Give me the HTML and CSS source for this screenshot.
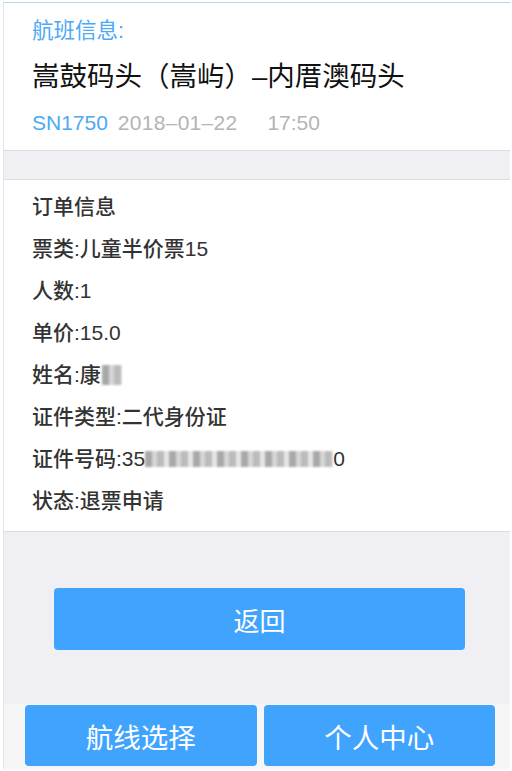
FILE: index.html
```html
<!DOCTYPE html>
<html lang="zh-CN">
<head>
    <meta charset="UTF-8">
    <meta name="viewport" content="width=device-width, initial-scale=1.0">
    <title>订单详情</title>
    <link rel="stylesheet" href="styles.css">
</head>
<body>
    <div class="screen">
        <div class="flight-card">
            <div class="flight-label">航班信息:</div>
            <div class="flight-route">嵩鼓码头（嵩屿）–内厝澳码头</div>
            <div class="flight-meta">
                <span class="flight-no">SN1750</span>
                <span class="flight-date">2018–01–22</span>
                <span class="flight-time">17:50</span>
            </div>
        </div>

        <div class="order-card">
            <div class="order-row">订单信息</div>
            <div class="order-row">票类:儿童半价票15</div>
            <div class="order-row">人数:1</div>
            <div class="order-row">单价:15.0</div>
            <div class="order-row">姓名:康<span class="mosaic mosaic-name"></span></div>
            <div class="order-row">证件类型:二代身份证</div>
            <div class="order-row">证件号码:35<span class="mosaic mosaic-id"></span>0</div>
            <div class="order-row">状态:退票申请</div>
        </div>

        <div class="back-area">
            <button class="blue-button back-button">返回</button>
        </div>

        <div class="tab-bar">
            <button class="blue-button tab-button">航线选择</button>
            <button class="blue-button tab-button">个人中心</button>
        </div>
    </div>
</body>
</html>
```

FILE: styles.css
```css
body {
    margin: 0;
    background: #fff;
    font-family: "Liberation Sans", "Noto Sans CJK SC", sans-serif;
}
.screen {
    width: 506px;
    margin: 2px 0 0 3px;
    border-top: 1px solid #b7d7e6;
    border-left: 1px solid #dde3ea;
    background: #efeff4;
}
.flight-card {
    background: white;
    padding: 8px 0 7px 28px;
    border-bottom: 1px solid #dcdce0;
}
.flight-label {
    color: #4ba9f5;
    font-size: 21.5px;
    line-height: 40px;
}
.flight-route {
    color: #111;
    font-size: 27.5px;
    line-height: 52px;
}
.flight-meta {
    font-size: 21px;
    line-height: 40px;
}
.flight-no {
    color: #4ba9f5;
}
.flight-date {
    color: #b4b4b4;
    margin-left: 4px;
    letter-spacing: 0.3px;
}
.flight-time {
    color: #b4b4b4;
    margin-left: 24px;
}
.order-card {
    margin-top: 28px;
    background: white;
    padding: 6px 0 9px 28px;
    border-top: 1px solid #dcdce0;
    border-bottom: 1px solid #dcdce0;
}
.order-row {
    color: #333;
    font-size: 21px;
    font-weight: 500;
    line-height: 42px;
}
.mosaic {
    display: inline-block;
    height: 20px;
    vertical-align: -3px;
    background: repeating-linear-gradient(90deg, #9a9a9a 0 7px, #cfcfcf 7px 12px, #b0b0b0 12px 19px, #e2e2e2 19px 24px);
    filter: blur(1.2px);
    opacity: 0.85;
}
.mosaic-name {
    width: 20px;
    margin-left: 1px;
}
.mosaic-id {
    width: 188px;
    height: 16px;
    vertical-align: -1px;
}
.back-area {
    padding: 56px 0 54px 50px;
}
.blue-button {
    background: #40a4ff;
    color: white;
    border: none;
    border-radius: 4px;
    font-family: "Liberation Sans", "Noto Sans CJK SC", sans-serif;
    cursor: pointer;
}
.back-button {
    display: block;
    width: 411px;
    height: 62px;
    font-size: 26px;
}
.tab-bar {
    display: flex;
    gap: 7px;
    padding: 1px 15px 3px 21px;
    background: #f5f5f5;
}
.tab-button {
    flex: 1;
    height: 61px;
    font-size: 27.5px;
}
```
